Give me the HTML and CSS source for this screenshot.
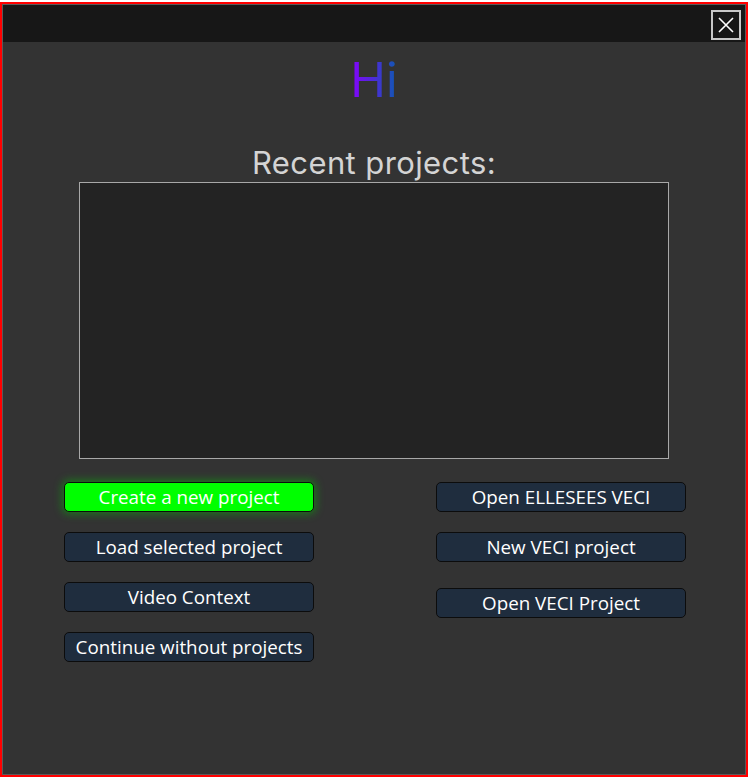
FILE: index.html
```html
<!DOCTYPE html>
<html>
<head>
<meta charset="utf-8">
<link rel="stylesheet" href="styles.css">
</head>
<body>
<div class="window">
  <div class="inner">
    <div class="titlebar">
      <button class="close" aria-label="Close">
        <svg width="18" height="18" viewBox="0 0 18 18"><path d="M2 2 L16 16 M16 2 L2 16" stroke="#ffffff" stroke-width="1.6" fill="none"/></svg>
      </button>
    </div>
    <div class="content">
      <h1 class="hi">Hi</h1>
      <h2 class="recent">Recent projects:</h2>
      <div class="list"></div>
      <div class="buttons">
        <div class="col">
          <button class="btn green">Create a new project</button>
          <button class="btn">Load selected project</button>
          <button class="btn">Video Context</button>
          <button class="btn">Continue without projects</button>
        </div>
        <div class="col right">
          <button class="btn">Open ELLESEES VECI</button>
          <button class="btn">New VECI project</button>
          <button class="btn r3">Open VECI Project</button>
        </div>
      </div>
    </div>
  </div>
</div>
</body>
</html>
```
FILE: styles.css
```css
html, body { margin: 0; padding: 0; background: #ffffff; }
body { padding-top: 2px; font-family: "Open Sans", "Noto Sans", sans-serif; }
.window {
  box-sizing: border-box;
  width: 748px;
  height: 775px;
  border: 2px solid #ff0000;
  background: #333333;
}
.inner {
  box-sizing: border-box;
  height: 100%;
  border: 1px solid #5a5a5a;
  display: flex;
  flex-direction: column;
}
.titlebar {
  height: 37px;
  background: #171717;
  display: flex;
  justify-content: flex-end;
  align-items: center;
  padding-right: 4px;
}
.close {
  box-sizing: border-box;
  width: 30px;
  height: 30px;
  border: 2px solid #c8c8c8;
  background: #171717;
  padding: 0;
  display: flex;
  align-items: center;
  justify-content: center;
  margin-top: 2px;
}
.content {
  display: flex;
  flex-direction: column;
  align-items: center;
}
.hi {
  margin: 10px 0 0 0;
  font-family: "Inter", "DejaVu Sans", sans-serif;
  font-weight: 400;
  font-size: 48px;
  line-height: 56px;
  background: linear-gradient(90deg, #8800ff, #0d5ab0);
  -webkit-background-clip: text;
  background-clip: text;
  color: transparent;
}
.recent {
  margin: 37px 0 0 0;
  font-family: "Inter", "DejaVu Sans", sans-serif;
  font-weight: 400;
  font-size: 31px;
  line-height: 36px;
  color: #d4d4d4;
  letter-spacing: 0.4px;
}
.list {
  box-sizing: border-box;
  width: 590px;
  height: 277px;
  margin-top: 1px;
  border: 1px solid #a8a8a8;
  background: #232323;
}
.buttons {
  align-self: stretch;
  display: flex;
  justify-content: space-between;
  padding: 23px 59px 0 61px;
}
.col {
  display: flex;
  flex-direction: column;
  gap: 20px;
}
.btn {
  box-sizing: border-box;
  width: 250px;
  height: 30px;
  border: 1px solid #0c0c0c;
  border-radius: 5px;
  background: #1f2d3e;
  color: #ffffff;
  font-family: "Open Sans", "Noto Sans", sans-serif;
  font-size: 18.8px;
  line-height: 28px;
  padding: 0;
}
.btn.green {
  background: #00ff00;
  box-shadow: 0 0 8px 2px rgba(0, 200, 0, 0.45);
}
.btn.r3 { margin-top: 6px; }
```
